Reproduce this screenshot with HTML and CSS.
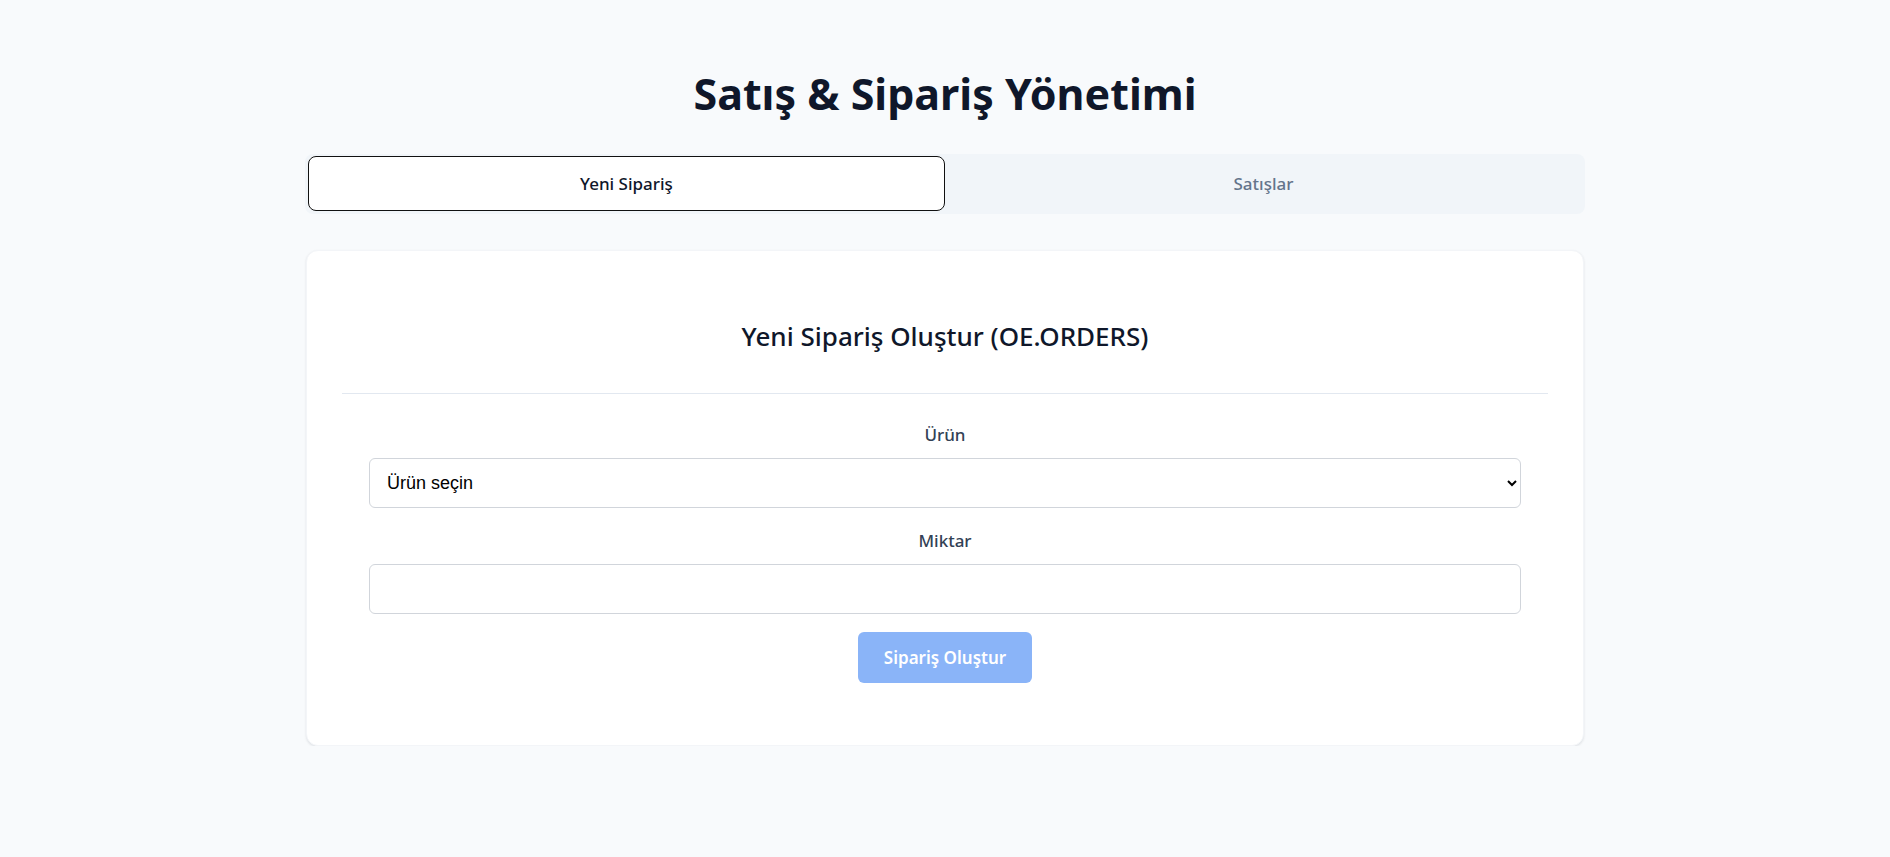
FILE: index.html
```html
<!DOCTYPE html>
<html lang="tr">
<head>
<meta charset="utf-8">
<title>Satış &amp; Sipariş Yönetimi</title>
<link rel="stylesheet" href="styles.css">
</head>
<body>
<div class="page">
  <h1 class="page-title">Satış &amp; Sipariş Yönetimi</h1>
  <div class="tabs">
    <button class="tab tab-active" type="button">Yeni Sipariş</button>
    <button class="tab" type="button">Satışlar</button>
  </div>
  <section class="card">
    <div class="card-header">
      <h2 class="card-title">Yeni Sipariş Oluştur (OE.ORDERS)</h2>
    </div>
    <form class="form">
      <div class="field">
        <label class="label" for="urun">Ürün</label>
        <select id="urun" class="control select">
          <option>Ürün seçin</option>
        </select>
      </div>
      <div class="field">
        <label class="label" for="miktar">Miktar</label>
        <input id="miktar" class="control" type="number">
      </div>
      <div class="actions">
        <button class="submit" type="button" disabled>Sipariş Oluştur</button>
      </div>
    </form>
  </section>
</div>
</body>
</html>
```
FILE: styles.css
```css
* { box-sizing: border-box; }
html, body { margin: 0; padding: 0; }
body {
  background: #f8fafc;
  font-family: "Noto Sans", "Open Sans", sans-serif;
  color: #0f172a;
}
.page {
  width: 1280px;
  margin: 0 auto;
  padding-top: 68px;
}
.page-title {
  margin: 0;
  text-align: center;
  font-size: 43px;
  line-height: 52px;
  font-weight: 700;
  color: #0f172a;
}
.tabs {
  margin-top: 34px;
  display: grid;
  grid-template-columns: 1fr 1fr;
  padding: 2px 3px 3px;
  background: #f1f5f9;
  border-radius: 8px;
}
.tab {
  height: 55px;
  border: 1px solid transparent;
  border-radius: 8px;
  background: transparent;
  font-family: inherit;
  font-size: 17px;
  font-weight: 500;
  color: #64748b;
  display: flex;
  align-items: center;
  justify-content: center;
  padding: 0;
}
.tab-active {
  background: #ffffff;
  border-color: #111111;
  color: #0f172a;
}
.card {
  margin: 36px 1px 0;
  background: #ffffff;
  border: 1px solid #f3f5f8;
  border-radius: 12px;
  box-shadow: 0 1px 3px rgba(15, 23, 42, 0.07), 0 1px 2px rgba(15, 23, 42, 0.04);
  padding: 36px 35px;
}
.card-header {
  padding: 31px 0 39px;
  border-bottom: 1px solid #e2e8f0;
}
.card-title {
  margin: 0;
  text-align: center;
  font-size: 26px;
  line-height: 36px;
  font-weight: 500;
  color: #0f172a;
}
.form {
  width: 1152px;
  margin: 0 auto;
  padding: 29px 0 26px;
  display: flex;
  flex-direction: column;
}
.field {
  display: flex;
  flex-direction: column;
  align-items: center;
}
.field + .field { margin-top: 21px; }
.label {
  font-size: 17px;
  line-height: 24px;
  font-weight: 500;
  color: #334155;
  margin-bottom: 11px;
}
.control {
  width: 100%;
  height: 50px;
  border: 1px solid #d1d5db;
  border-radius: 6px;
  background: #ffffff;
  font-family: "Liberation Sans", Arial, sans-serif;
  font-size: 18px;
  color: #000000;
  padding: 0 14px;
}
.select { padding-left: 13px; padding-right: 10px; }
.actions {
  margin-top: 18px;
  display: flex;
  justify-content: center;
}
.submit {
  height: 51px;
  padding: 0 26px;
  border: none;
  border-radius: 6px;
  background: #8ab4f8;
  color: #ffffff;
  font-family: "Noto Sans", "Open Sans", sans-serif;
  font-size: 17px;
  font-weight: 600;
}
```
